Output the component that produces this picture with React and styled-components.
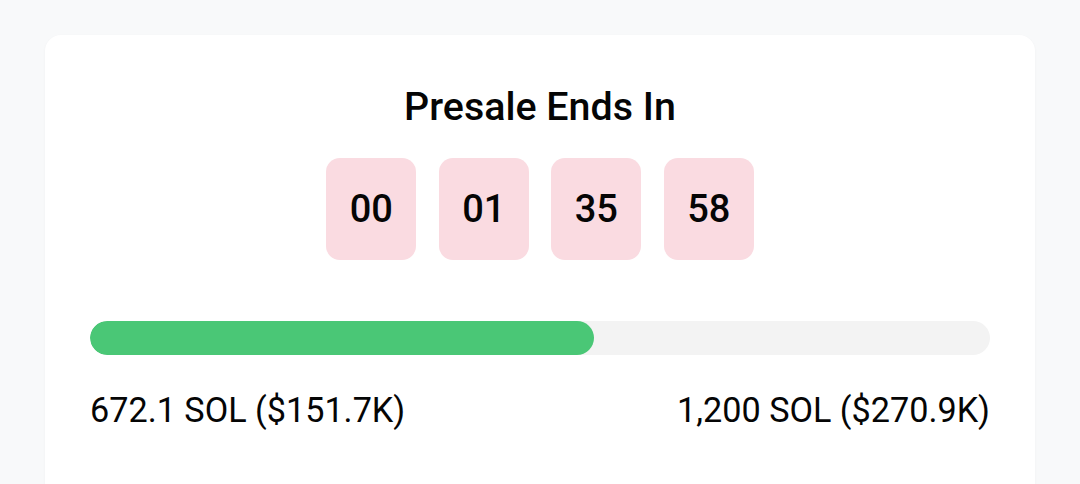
import styled, { createGlobalStyle } from "styled-components";

const GlobalStyle = createGlobalStyle`
  html, body {
    margin: 0;
    padding: 0;
    background: #f8f9fa;
    font-family: Roboto, "Liberation Sans", sans-serif;
  }
`;

const Page = styled.div`
  padding: 35px 45px 0;
  height: 484px;
  box-sizing: border-box;
  overflow: hidden;
`;

const Card = styled.section`
  background: #ffffff;
  border-radius: 16px;
  box-shadow: 0 1px 3px rgba(0, 0, 0, 0.04);
  padding: 52px 45px 90px;
`;

const Title = styled.h2`
  margin: 0;
  text-align: center;
  font-size: 39.4px;
  font-weight: 500;
  line-height: 40px;
  color: #050505;
`;

const Countdown = styled.div`
  display: flex;
  justify-content: center;
  gap: 22.5px;
  margin-top: 31px;
`;

const TimeBox = styled.div`
  width: 90px;
  height: 102px;
  border-radius: 14px;
  background: #fadbe1;
  display: flex;
  align-items: center;
  justify-content: center;
  font-size: 38px;
  font-weight: 500;
  color: #050505;
`;

const Track = styled.div`
  margin-top: 61px;
  height: 34px;
  border-radius: 17px;
  background: #f3f3f3;
  overflow: hidden;
`;

const Fill = styled.div`
  height: 100%;
  border-radius: 17px;
  background: #4ac776;
`;

const Amounts = styled.div`
  display: flex;
  justify-content: space-between;
  margin-top: 38px;
  font-size: 34.2px;
  line-height: 34px;
  color: #050505;
`;

const raised = 672.1;
const goal = 1200;

export default function App() {
  const parts = ["00", "01", "35", "58"];
  return (
    <>
      <GlobalStyle />
      <Page>
        <Card>
          <Title>Presale Ends In</Title>
          <Countdown>
            {parts.map((p, i) => (
              <TimeBox key={i}>{p}</TimeBox>
            ))}
          </Countdown>
          <Track>
            <Fill style={{ width: `${(raised / goal) * 100}%` }} />
          </Track>
          <Amounts>
            <span>672.1 SOL ($151.7K)</span>
            <span>1,200 SOL ($270.9K)</span>
          </Amounts>
        </Card>
      </Page>
    </>
  );
}
